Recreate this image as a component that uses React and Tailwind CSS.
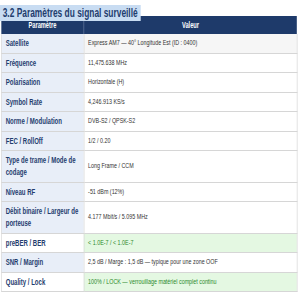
export default function App() {
  const rows = [
    { k: "Satellite", v: "Express AM7 — 40° Longitude Est (ID : 0400)" },
    { k: "Fréquence", v: "11,475.638 MHz" },
    { k: "Polarisation", v: "Horizontale (H)" },
    { k: "Symbol Rate", v: "4,246.913 KS/s" },
    { k: "Norme / Modulation", v: "DVB-S2 / QPSK-S2" },
    { k: "FEC / RollOff", v: "1/2 / 0.20" },
    { k: "Type de trame / Mode de codage", v: "Long Frame / CCM" },
    { k: "Niveau RF", v: "-51 dBm (12%)" },
    { k: "Débit binaire / Largeur de porteuse", v: "4.177 Mbit/s / 5.095 MHz" },
    { k: "preBER / BER", v: "< 1.0E-7 / < 1.0E-7", good: true },
    { k: "SNR / Margin", v: "2,5 dB / Marge : 1,5 dB — typique pour une zone OOF" },
    { k: "Quality / Lock", v: "100% / LOCK — verrouillage matériel complet continu", good: true },
  ];
  return (
    <div className="w-[300px] h-[300px] overflow-hidden bg-white">
      <div className="w-[448px] origin-top-left scale-x-[0.67] font-['Liberation_Sans',Arial,sans-serif]">
        <div className="h-4">
          <span className="inline-block bg-[#c8dcf2] px-[4px] text-[12.5px] leading-[16px] font-bold text-[#1f3d6e]">
            3.2 Paramètres du signal surveillé
          </span>
        </div>
        <table className="ml-[1.5px] w-[442px] border-collapse table-fixed">
          <colgroup>
            <col className="w-[123px]" />
            <col />
          </colgroup>
          <thead>
            <tr className="bg-[#1e3a6a] text-white">
              <th className="py-[3px] text-[8.5px] leading-[12px] font-bold text-center border-r border-[#3b5685]">Paramètre</th>
              <th className="py-[3px] text-[8.5px] leading-[12px] font-bold text-center">Valeur</th>
            </tr>
          </thead>
          <tbody>
            {rows.map((r, i) => (
              <tr key={i}>
                <td
                  className={
                    "border-b border-r border-l border-[#d6d6d6] px-[6px] py-[3.25px] text-[9px] leading-[12px] font-bold text-[#1f3d6e] align-middle " +
                    (r.good ? "bg-white" : "bg-[#e8eef8]")
                  }
                >
                  {r.k}
                </td>
                <td
                  className={
                    "border-b border-r border-[#d6d6d6] px-[6px] py-[3.25px] text-[8px] leading-[12px] align-middle " +
                    (r.good ? "bg-[#e4f8e2] text-[#2a8a2a]" : i === 0 ? "bg-[#f6f6f6] text-[#333333]" : "bg-white text-[#333333]")
                  }
                >
                  {r.v}
                </td>
              </tr>
            ))}
          </tbody>
        </table>
      </div>
    </div>
  );
}
